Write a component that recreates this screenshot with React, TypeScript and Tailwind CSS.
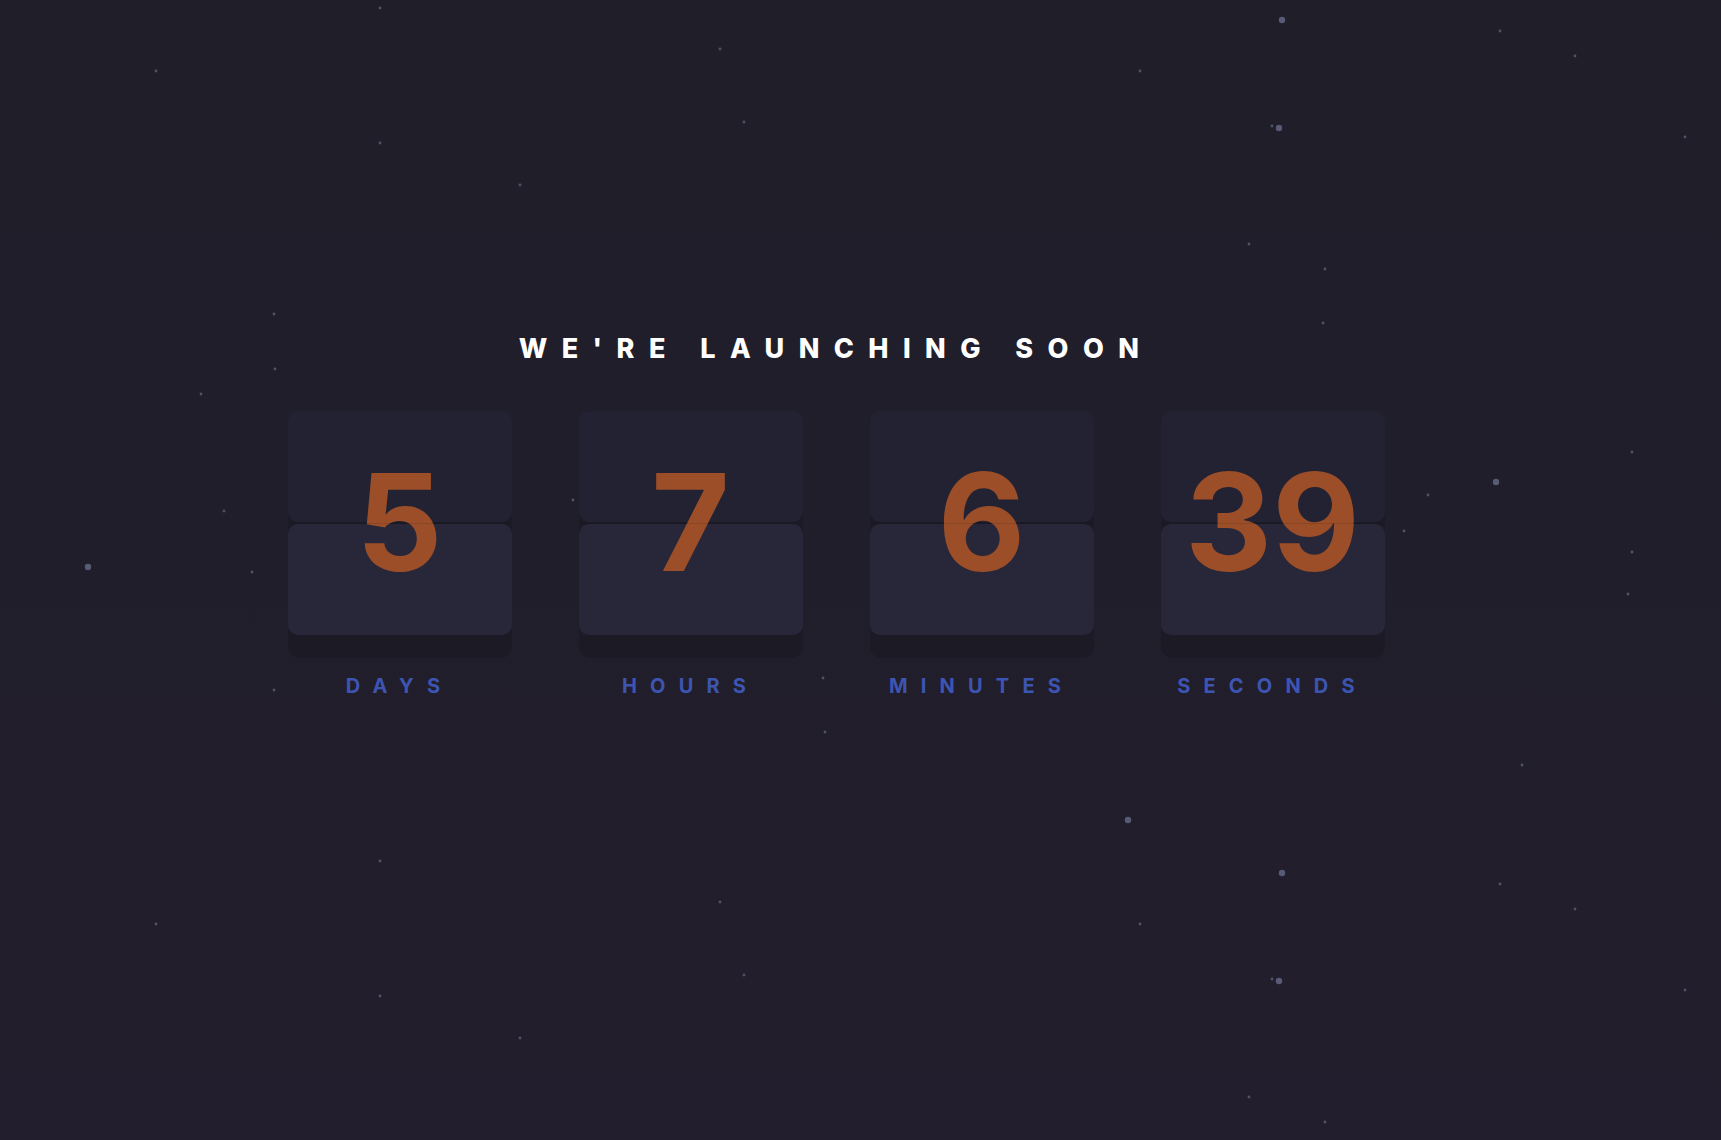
const stars: [number, number, number][] = [
  [380, 8, 1.4], [156, 71, 1.4], [720, 49, 1.4], [744, 122, 1.4], [380, 143, 1.4], [520, 185, 1.4],
  [1282, 20, 3.2], [1500, 31, 1.4], [1575, 56, 1.4], [1140, 71, 1.4], [1279, 128, 3.2], [1272, 126, 1.4],
  [1685, 137, 1.4], [1249, 244, 1.4], [1325, 269, 1.4], [1323, 323, 1.4],
  [274, 314, 1.4], [275, 369, 1.4], [201, 394, 1.4], [224, 511, 1.4], [88, 567, 3.2], [252, 572, 1.4],
  [274, 690, 1.4], [573, 500, 1.4], [823, 678, 1.4], [825, 732, 1.4],
  [1632, 452, 1.4], [1496, 482, 3.2], [1428, 495, 1.4], [1404, 531, 1.4], [1632, 552, 1.4], [1628, 594, 1.4],
  [1522, 765, 1.4], [1128, 820, 3.2],
  [380, 861, 1.4], [156, 924, 1.4], [720, 902, 1.4], [744, 975, 1.4], [380, 996, 1.4], [520, 1038, 1.4],
  [1282, 873, 3.2], [1500, 884, 1.4], [1575, 909, 1.4], [1140, 924, 1.4], [1279, 981, 3.2], [1272, 979, 1.4],
  [1685, 990, 1.4], [1249, 1097, 1.4], [1325, 1122, 1.4],
];

const units = [
  { value: 5, label: 'DAYS' },
  { value: 7, label: 'HOURS' },
  { value: 6, label: 'MINUTES' },
  { value: 39, label: 'SECONDS' },
];

function FlipCard({ value, label }: { value: number; label: string }) {
  return (
    <div className="flex flex-col items-center">
      <div className="relative w-[224px] rounded-[12px] bg-[#1c1a25] pb-[23px]">
        {/* two halves of the card */}
        <div className="flex flex-col gap-[2px]">
          <div className="h-[111px] rounded-[10px] bg-[#232233]" />
          <div className="h-[111px] rounded-[10px] bg-[#282739]" />
        </div>
        {/* the number sits across both halves */}
        <div className="absolute inset-x-0 top-0 flex h-[224px] -translate-y-[1px] items-center justify-center">
          <span className="text-[135px] leading-none font-bold text-[#9b4e27] [font-family:Inter,'Liberation_Sans',sans-serif]">
            {value}
          </span>
        </div>
        <div className="absolute inset-x-0 top-[112px] h-px bg-black/10" />
      </div>
      <span className="mt-[18px] text-[20px] leading-none font-bold tracking-[0.66em] text-[#3d55b2] [font-family:Inter,'Liberation_Sans',sans-serif]">
        {label}
      </span>
    </div>
  );
}

export default function App() {
  return (
    <div className="relative min-h-screen w-full overflow-hidden bg-gradient-to-b from-[#1f1e29] to-[#231e2d]">
      {/* starfield */}
      <svg
        className="absolute inset-0 h-full w-full"
        viewBox="0 0 1721 1140"
        preserveAspectRatio="none"
      >
        {stars.map(([x, y, r], i) => (
          <circle key={i} cx={x} cy={y} r={r} fill={r > 2 ? '#575b75' : '#4f5269'} />
        ))}
      </svg>

      <div className="relative flex h-[1140px] flex-col items-center pt-[335px] pr-[49px]">
        <h1 className="text-[27px] leading-none font-extrabold tracking-[0.535em] text-white [font-family:Inter,'Liberation_Sans',sans-serif]">
          WE'RE LAUNCHING SOON
        </h1>

        <div className="mt-[49px] flex gap-[67px]">
          {units.map((u) => (
            <FlipCard key={u.label} value={u.value} label={u.label} />
          ))}
        </div>
      </div>
    </div>
  );
}
